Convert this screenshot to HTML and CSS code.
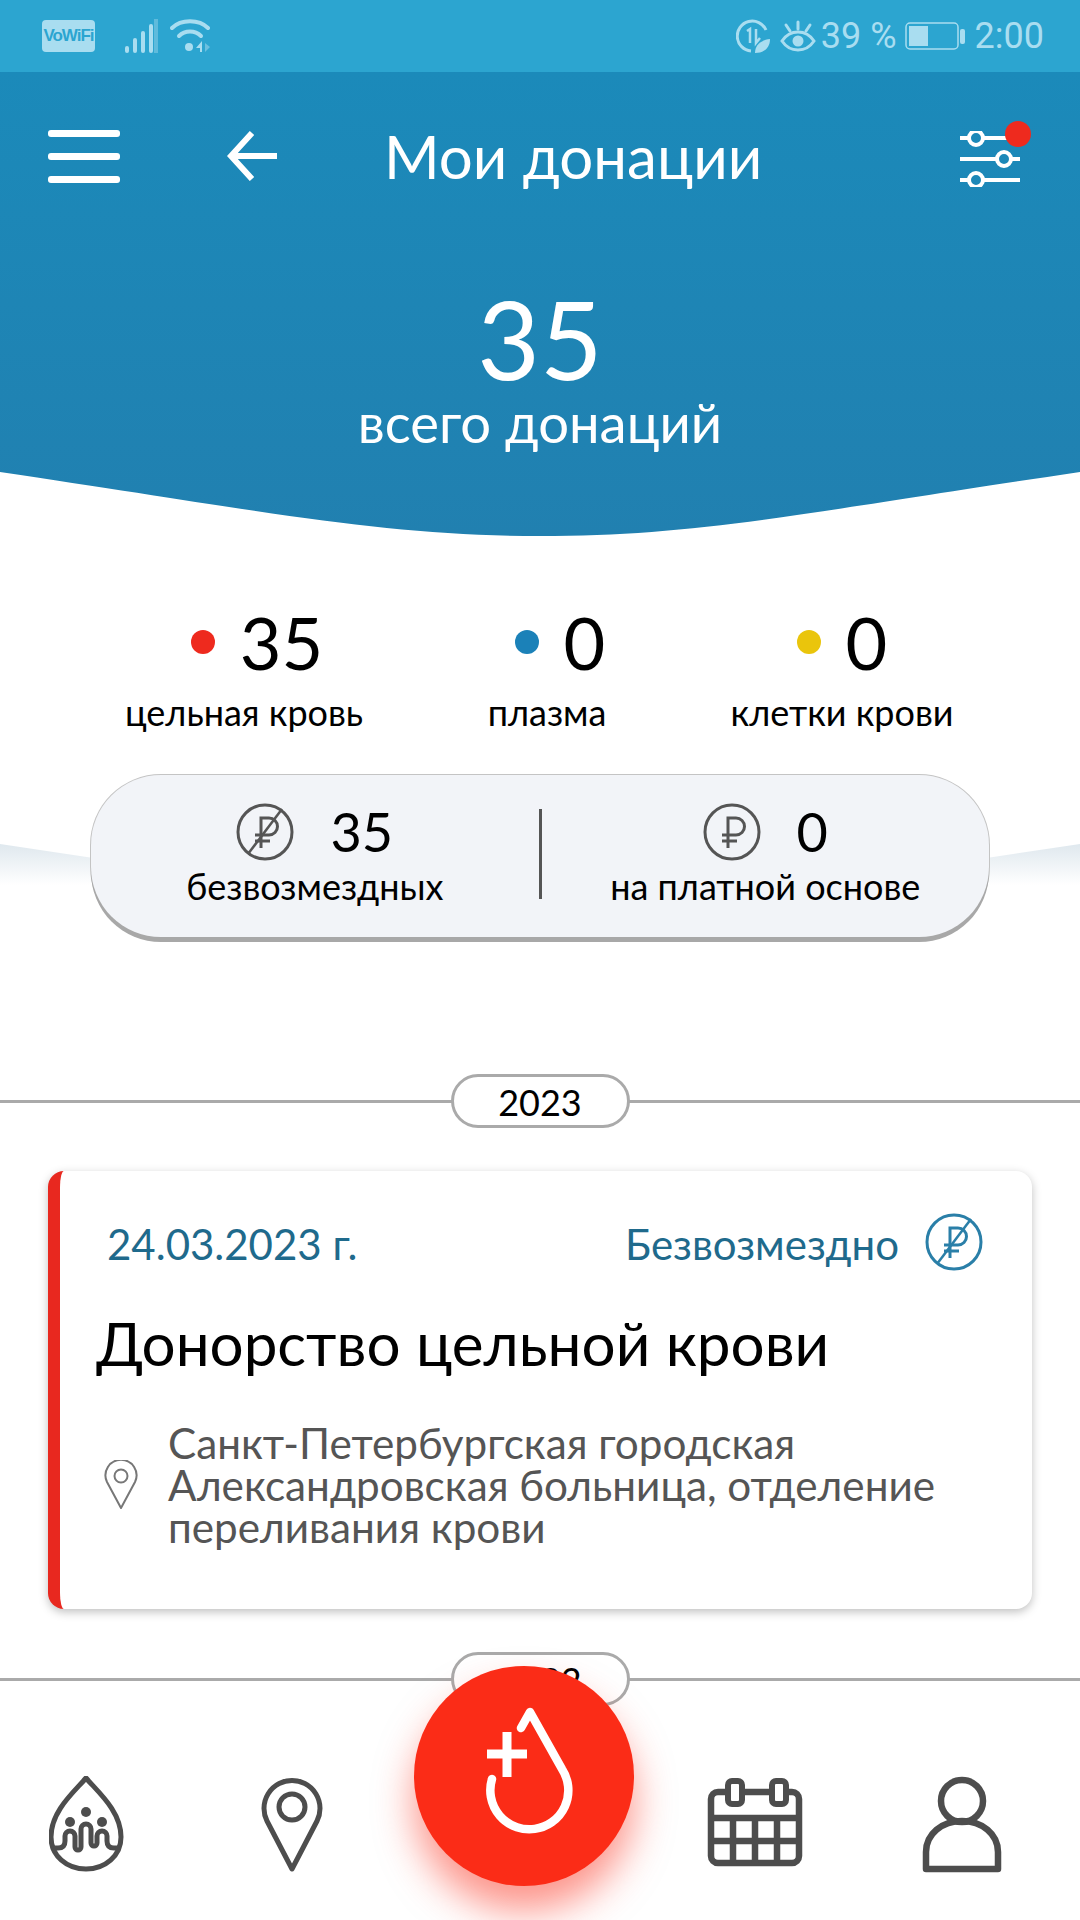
FILE: index.html
```html
<!DOCTYPE html>
<html lang="ru">
<head>
<meta charset="utf-8">
<title>Мои донации</title>
<link rel="stylesheet" href="styles.css">
</head>
<body>

<svg class="defs" width="0" height="0">
  <symbol id="ruble" viewBox="0 0 58 58">
    <circle cx="29" cy="29" r="27" fill="none" stroke="currentColor" stroke-width="3"/>
    <path d="M25 45V15H33A8.5 8.5 0 0 1 33 32H19M19 38H34" fill="none" stroke="currentColor" stroke-width="3"/>
  </symbol>
  <symbol id="ruble-free" viewBox="0 0 58 58">
    <circle cx="29" cy="29" r="27" fill="none" stroke="currentColor" stroke-width="3"/>
    <path d="M25 45V15H33A8.5 8.5 0 0 1 33 32H19M19 38H34" fill="none" stroke="currentColor" stroke-width="3"/>
    <path d="M12 51L46 6" fill="none" stroke="currentColor" stroke-width="2.5"/>
  </symbol>
</svg>

<div class="page">

  <div class="statusbar">
    <div class="status-left">
      <span class="vowifi">VoWiFi</span>
      <svg class="signal" width="33" height="34" viewBox="0 0 33 34">
        <g fill="#a9ddf0">
          <rect x="0" y="27" width="4" height="7" rx="2"/>
          <rect x="8" y="19" width="4" height="15" rx="2"/>
          <rect x="16" y="12" width="4" height="22" rx="2"/>
          <rect x="24" y="5" width="4" height="29" rx="2"/>
        </g>
        <rect x="29" y="0" width="4" height="34" fill="#5fbbdc"/>
      </svg>
      <svg class="wifi" width="40" height="34" viewBox="0 0 40 34">
        <g fill="none" stroke="#a9ddf0" stroke-width="4" stroke-linecap="round">
          <path d="M2 9C11 0 29 0 38 9"/>
          <path d="M9 17C15 11 25 11 31 17"/>
        </g>
        <circle cx="19" cy="28" r="4" fill="#a9ddf0"/>
        <path d="M32 22L26 29H30V33H32Z" fill="#a9ddf0"/>
        <path d="M35 24L40 28L35 33Z" fill="#6cc0df"/>
      </svg>
    </div>
    <div class="status-right">
      <svg width="34" height="34" viewBox="0 0 34 34">
        <path d="M30 11A15 15 0 1 0 15 32" fill="none" stroke="#a9ddf0" stroke-width="3"/>
        <path d="M11 12L14 10V24M20 10V24L24 19" fill="none" stroke="#a9ddf0" stroke-width="2.5"/>
        <path d="M19 34C19 26 25 21 34 20C34 28 29 34 19 34Z" fill="#a9ddf0"/>
      </svg>
      <svg class="eye" width="36" height="33" viewBox="0 0 36 33">
        <g fill="none" stroke="#a9ddf0" stroke-width="3" stroke-linecap="round">
          <path d="M2 21C10 9 26 9 34 21C26 33 10 33 2 21Z"/>
          <path d="M18 2V9M6 5L10 11M30 5L26 11"/>
        </g>
        <circle cx="18" cy="21" r="5.5" fill="#a9ddf0"/>
      </svg>
      <span class="status-text pct">39 %</span>
      <svg class="battery" width="60" height="28" viewBox="0 0 60 28">
        <rect x="1" y="1" width="52" height="26" rx="4" fill="none" stroke="#a9ddf0" stroke-width="1.5"/>
        <rect x="4" y="4" width="19" height="20" fill="#a9ddf0"/>
        <rect x="55" y="7" width="5" height="15" rx="2" fill="#a9ddf0"/>
      </svg>
      <span class="status-text">2:00</span>
    </div>
  </div>

  <div class="header">
    <div class="toolbar">
      <div class="burger"><i></i><i></i><i></i></div>
      <svg class="back" width="50" height="50" viewBox="0 0 50 50">
        <path d="M25 2L4 25L25 48M4 25H50" fill="none" stroke="#fff" stroke-width="6"/>
      </svg>
      <div class="title">Мои донации</div>
      <div class="filter">
        <svg width="60" height="56" viewBox="0 0 60 56">
          <g fill="none" stroke="#fff" stroke-width="4">
            <path d="M0 7H8M24 7H60M0 28H36M52 28H60M0 49H8M24 49H60"/>
            <circle cx="16" cy="7" r="7"/>
            <circle cx="44" cy="28" r="7"/>
            <circle cx="16" cy="49" r="7"/>
          </g>
        </svg>
        <span class="filter-dot"></span>
      </div>
    </div>
    <div class="total">35</div>
    <div class="total-label">всего донаций</div>
  </div>

  <div class="stats">
    <div class="stat stat-blood">
      <div class="stat-top"><span class="dot dot-red"></span><span class="stat-num">35</span></div>
      <div class="stat-label">цельная кровь</div>
    </div>
    <div class="stat stat-plasma">
      <div class="stat-top"><span class="dot dot-blue"></span><span class="stat-num">0</span></div>
      <div class="stat-label">плазма</div>
    </div>
    <div class="stat stat-cells">
      <div class="stat-top"><span class="dot dot-yellow"></span><span class="stat-num">0</span></div>
      <div class="stat-label">клетки крови</div>
    </div>
  </div>

  <div class="pill-wrap">
    <svg class="swoosh" width="1080" height="44" viewBox="0 0 1080 44">
      <defs>
        <linearGradient id="fade" x1="0" y1="0" x2="0" y2="1">
          <stop offset="0" stop-color="#dfe8ee"/>
          <stop offset="1" stop-color="#fff"/>
        </linearGradient>
      </defs>
      <path d="M0 3L100 18V44H0Z" fill="url(#fade)"/>
      <path d="M1080 3L980 18V44H1080Z" fill="url(#fade)"/>
    </svg>
    <div class="pill">
      <div class="pill-side">
        <div class="pill-top">
          <svg class="rub" width="58" height="58"><use href="#ruble-free"/></svg>
          <span class="pill-num">35</span>
        </div>
        <div class="pill-label">безвозмездных</div>
      </div>
      <div class="pill-line"></div>
      <div class="pill-side">
        <div class="pill-top">
          <svg class="rub" width="58" height="58"><use href="#ruble"/></svg>
          <span class="pill-num">0</span>
        </div>
        <div class="pill-label">на платной основе</div>
      </div>
    </div>
  </div>

  <div class="year year-first"><span>2023</span></div>

  <div class="card">
    <div class="card-top">
      <span class="card-date">24.03.2023 г.</span>
      <span class="card-type">Безвозмездно</span>
      <svg class="card-rub" width="58" height="58"><use href="#ruble-free"/></svg>
    </div>
    <div class="card-title">Донорство цельной крови</div>
    <div class="card-place">
      <svg class="card-pin" width="34" height="50" viewBox="0 0 34 50">
        <path d="M17 48L3 22A15.5 15.5 0 1 1 31 22Z" fill="none" stroke="#777" stroke-width="2" stroke-linejoin="round"/>
        <circle cx="17" cy="16" r="6.5" fill="none" stroke="#777" stroke-width="2"/>
      </svg>
      <div class="card-addr">Санкт-Петербургская городская<br>Александровская больница, отделение<br>переливания крови</div>
    </div>
  </div>

  <div class="year"><span>2022</span></div>

  <div class="nav">
    <div class="nav-group">
      <svg width="76" height="96" viewBox="20 15 76 96">
        <g fill="none" stroke="#4d4d4d" stroke-width="5">
          <path d="M57 17C45 31 22 50 22 76C22 95 38 108 57 108C76 108 92 95 92 76C92 50 69 31 57 17Z"/>
          <path d="M25 87H29Q36 87 36 80V75A5 5 0 0 1 46 75V86A3 3 0 0 0 52 86V68A5 5 0 0 1 62 68V82A3 3 0 0 0 68 82V75A5 5 0 0 1 78 75V80Q78 87 85 87H89"/>
        </g>
        <g fill="#4d4d4d">
          <circle cx="41" cy="61" r="5"/>
          <circle cx="57" cy="51" r="5"/>
          <circle cx="73" cy="61" r="5"/>
        </g>
      </svg>
      <svg width="64" height="96" viewBox="230 15 64 96">
        <path d="M262 108L237 60A28 28 0 1 1 287 60Z" fill="none" stroke="#4d4d4d" stroke-width="5" stroke-linejoin="round"/>
        <circle cx="262" cy="46" r="13" fill="none" stroke="#4d4d4d" stroke-width="5"/>
      </svg>
    </div>
    <div class="nav-group nav-right">
      <svg width="98" height="92" viewBox="0 0 98 92">
        <g fill="none" stroke="#4d4d4d" stroke-width="6.5">
          <rect x="5" y="16" width="88" height="71" rx="7"/>
          <path d="M5 42H93M5 65H93M27 42V87M49 42V87M71 42V87"/>
        </g>
        <rect x="22" y="5" width="14" height="23" rx="4" fill="#fff" stroke="#4d4d4d" stroke-width="6"/>
        <rect x="66" y="5" width="14" height="23" rx="4" fill="#fff" stroke="#4d4d4d" stroke-width="6"/>
      </svg>
      <svg width="80" height="98" viewBox="0 0 80 98">
        <circle cx="40" cy="25" r="21" fill="none" stroke="#4d4d4d" stroke-width="6.5"/>
        <path d="M4 93V76C4 58 20 45 40 45C60 45 76 58 76 76V93Z" fill="none" stroke="#4d4d4d" stroke-width="6.5" stroke-linejoin="round"/>
      </svg>
    </div>
    <div class="fab">
      <svg width="100" height="140" viewBox="0 0 100 140">
        <g fill="none" stroke="#fff" stroke-linecap="round">
          <path d="M41 27L50 11L82 68A39 39 0 1 1 12 78" stroke-width="8.5" stroke-linejoin="round"/>
          <path d="M7 53H47M27 31V76" stroke-width="9" stroke-linecap="butt"/>
        </g>
      </svg>
    </div>
  </div>

</div>
</body>
</html>
```

FILE: styles.css
```css
* {
  box-sizing: border-box;
}

html, body {
  margin: 0;
  background: #fff;
}

body {
  font-family: Lato, "Noto Sans", sans-serif;
  color: #000;
}

.defs {
  position: absolute;
}

.page {
  width: 1080px;
  height: 1920px;
  overflow: hidden;
}

/* status bar */
.statusbar {
  height: 72px;
  background: #2ca5d0;
  display: flex;
  justify-content: space-between;
  align-items: center;
  padding: 0 36px 0 42px;
}

.status-left, .status-right {
  display: flex;
  align-items: center;
}

.vowifi {
  width: 53px;
  height: 32px;
  line-height: 32px;
  border-radius: 4px;
  background: #a9ddf0;
  color: #2ca5d0;
  font-family: "Liberation Sans", sans-serif;
  font-size: 17px;
  font-weight: bold;
  text-align: center;
  letter-spacing: -1px;
}

.signal {
  margin-left: 30px;
}

.wifi {
  margin-left: 12px;
}

.eye {
  margin-left: 10px;
}

.status-text {
  font-family: Roboto, sans-serif;
  font-size: 36px;
  color: #a9ddf0;
}

.pct {
  margin-left: 5px;
}

.battery {
  margin: 0 10px 0 8px;
}

/* blue header */
.header {
  height: 464px;
  background: linear-gradient(#1b8aba, #2180b0);
  clip-path: path('M0 0H1080V400C810 440 700 464 540 464C380 464 270 440 0 400Z');
  color: #fff;
  text-align: center;
}

.toolbar {
  height: 168px;
  display: flex;
  align-items: center;
  padding: 0 60px 0 48px;
}

.burger {
  width: 72px;
  height: 53px;
  display: flex;
  flex-direction: column;
  justify-content: space-between;
}

.burger i {
  height: 7px;
  border-radius: 3px;
  background: #fff;
}

.back {
  margin-left: 107px;
}

.title {
  margin-left: 107px;
  font-size: 60px;
  width: 420px;
  text-align: left;
}

.filter {
  position: relative;
  margin-left: auto;
  margin-top: 6px;
  height: 56px;
}

.filter-dot {
  position: absolute;
  top: -10px;
  right: -11px;
  width: 26px;
  height: 26px;
  border-radius: 50%;
  background: #ee2a1e;
}

.total {
  font-size: 108px;
  line-height: 108px;
  margin-top: 44px;
}

.total-label {
  font-size: 54.4px;
  line-height: 60px;
}

/* three counters */
.stats {
  display: grid;
  grid-template-columns: 300px 300px 300px;
  padding: 70px 0 0 94px;
}

.stat {
  text-align: center;
}

.stat-top {
  display: flex;
  align-items: center;
  justify-content: center;
  gap: 25px;
  height: 72px;
}

.stat-blood .stat-top {
  padding-left: 26px;
}

.stat-plasma {
  padding-left: 6px;
}

.stat-plasma .stat-top {
  padding-left: 26px;
}

.stat-cells {
  padding-right: 4px;
}

.dot {
  width: 24px;
  height: 24px;
  border-radius: 50%;
}

.dot-red { background: #ee2a1e; }
.dot-blue { background: #1b81b8; }
.dot-yellow { background: #eac50c; }

.stat-num {
  font-size: 72px;
  line-height: 72px;
}

.stat-label {
  font-size: 36px;
  line-height: 40px;
  margin-top: 14px;
}

/* paid / free pill */
.pill-wrap {
  position: relative;
  padding: 0 91px;
  margin-top: 43px;
}

.swoosh {
  position: absolute;
  left: 0;
  top: 66px;
}

.pill {
  position: relative;
  height: 162px;
  padding-bottom: 4px;
  border-radius: 70px;
  background: #f2f4f8;
  box-shadow: 0 5px 0 #a8a8a8, 0 0 0 1px #c4c4c4;
  display: flex;
  align-items: center;
}

.pill-side {
  flex: 1;
  text-align: center;
}

.pill-top {
  display: flex;
  justify-content: center;
  align-items: center;
  gap: 36px;
  height: 58px;
}

.rub {
  color: #555;
}

.pill-num {
  font-size: 54px;
  line-height: 58px;
}

.pill-label {
  font-size: 36px;
  line-height: 40px;
  margin-top: 5px;
}

.pill-line {
  width: 3px;
  height: 90px;
  background: #555;
}

/* year separator */
.year {
  height: 54px;
  margin-top: 43px;
  display: flex;
  justify-content: center;
  align-items: center;
  background: linear-gradient(#aaa, #aaa) center / 100% 3px no-repeat;
}

.year-first {
  margin-top: 137px;
}

.year span {
  width: 179px;
  height: 54px;
  border: 3px solid #aaa;
  border-radius: 27px;
  background: #fff;
  font-size: 36px;
  line-height: 50px;
  text-align: center;
}

/* donation card */
.card {
  margin: 43px 48px 0;
  height: 438px;
  border-left: 12px solid #e8281f;
  border-radius: 16px;
  background: #fff;
  box-shadow: 0 3px 10px rgba(0, 0, 0, 0.25);
  padding: 42px 0 0 36px;
}

.card-top {
  display: flex;
  align-items: center;
  height: 58px;
  padding: 0 49px 0 11px;
  color: #1f6a8c;
  font-size: 42px;
}

.card-date {
  margin-top: 3px;
}

.card-type {
  margin: 3px 0 0 auto;
}

.card-rub {
  margin-left: 26px;
  color: #2a7fa8;
}

.card-title {
  font-size: 60.2px;
  line-height: 72px;
  margin-top: 36px;
}

.card-place {
  display: flex;
  align-items: center;
  margin-top: 43px;
}

.card-pin {
  margin-left: 8px;
}

.card-addr {
  margin-left: 30px;
  font-size: 42.25px;
  line-height: 42px;
  color: #555;
}

/* bottom navigation */
.nav {
  position: relative;
  display: flex;
  justify-content: space-between;
  padding: 70px 78px 0 49px;
}

.nav-group {
  display: flex;
  align-items: flex-start;
  gap: 135px;
}

.nav-right {
  gap: 118px;
}

.fab {
  position: absolute;
  left: 414px;
  top: -40px;
  width: 220px;
  height: 220px;
  border-radius: 50%;
  background: #fb2c17;
  box-shadow: 0 25px 38px rgba(251, 44, 23, 0.5);
  padding: 35px 0 0 66px;
}
```
